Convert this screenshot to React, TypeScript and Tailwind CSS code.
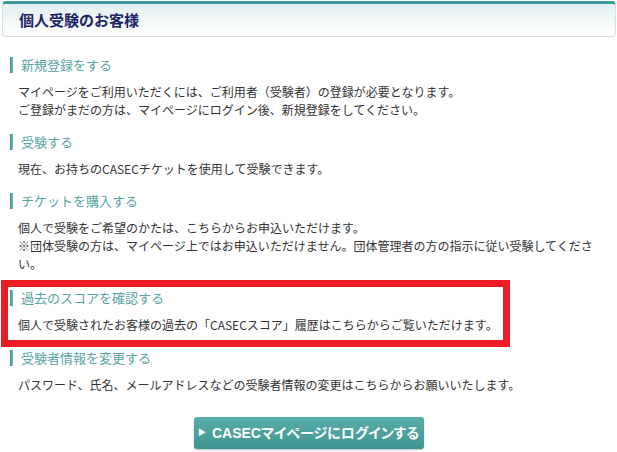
import React from 'react';

const sections = [
  {
    id: 'register',
    title: '新規登録をする',
    lines: [
      'マイページをご利用いただくには、ご利用者（受験者）の登録が必要となります。',
      'ご登録がまだの方は、マイページにログイン後、新規登録をしてください。',
    ],
  },
  {
    id: 'exam',
    title: '受験する',
    lines: ['現在、お持ちのCASECチケットを使用して受験できます。'],
  },
  {
    id: 'ticket',
    title: 'チケットを購入する',
    lines: [
      '個人で受験をご希望のかたは、こちらからお申込いただけます。',
      '※団体受験の方は、マイページ上ではお申込いただけません。団体管理者の方の指示に従い受験してください。',
    ],
  },
];

const Heading: React.FC<{ title: string }> = ({ title }) => (
  <div className="flex items-center h-[18px]">
    <span className="w-[3px] h-[16px] bg-gradient-to-r from-[#2e8f8b] to-[#7dbdba]" />
    <span className="ml-[8px] text-[13px] leading-[18px] text-[#58a4a2]">{title}</span>
  </div>
);

const Body: React.FC<{ lines: string[]; nowrap?: boolean }> = ({ lines, nowrap }) => (
  <div className={`mt-[9px] pl-[8px] text-[12px] leading-[18px] text-[#333333] ${nowrap ? 'whitespace-nowrap' : ''}`}>
    {lines.map((line) => (
      <p key={line}>{line}</p>
    ))}
  </div>
);

export default function App() {
  return (
    <div className="w-[617px] h-[452px] overflow-hidden bg-white font-['Noto_Sans_CJK_JP',sans-serif] pl-[2px] pr-[1px] pt-[1px]">
      {/* header */}
      <div className="h-[36px] flex items-center pl-[16px] pt-[1px] rounded-[4px] border border-[#d9dede] border-t-[3px] border-t-[#3a9b97] bg-gradient-to-b from-[#e3f0f0] to-white">
        <h1 className="text-[15px] font-bold text-[#1b2466]">個人受験のお客様</h1>
      </div>

      <div className="pl-[8px] pr-[15px]">
        {sections.map((s, i) => (
          <section key={s.id} className={i === 0 ? 'mt-[19px]' : 'mt-[14px]'}>
            <Heading title={s.title} />
            <Body lines={s.lines} />
          </section>
        ))}

        {/* highlighted */}
        <section className="mt-[7px] -ml-[9px] w-[509px] border-[7px] border-[#ec1c24] pl-[2px] pt-[2px] pb-[6px]">
          <Heading title="過去のスコアを確認する" />
          <Body lines={['個人で受験されたお客様の過去の「CASECスコア」履歴はこちらからご覧いただけます。']} nowrap />
        </section>

        <section className="mt-[2px]">
          <Heading title="受験者情報を変更する" />
          <Body lines={['パスワード、氏名、メールアドレスなどの受験者情報の変更はこちらからお願いいたします。']} />
        </section>
      </div>

      <div className="flex justify-center mt-[23px] pr-[1px]">
        <button className="w-[230px] h-[32px] rounded-[3px] bg-gradient-to-b from-[#5aaea9] to-[#3e9590] shadow-[0_1px_2px_rgba(0,0,0,0.25)] flex items-center justify-center text-white font-bold text-[14px] font-['Liberation_Sans','Noto_Sans_CJK_JP',sans-serif] [font-feature-settings:'palt']">
          <span className="text-[8px] mr-[6px]">▶</span>
          <span>CASECマイページにログインする</span>
        </button>
      </div>
    </div>
  );
}
